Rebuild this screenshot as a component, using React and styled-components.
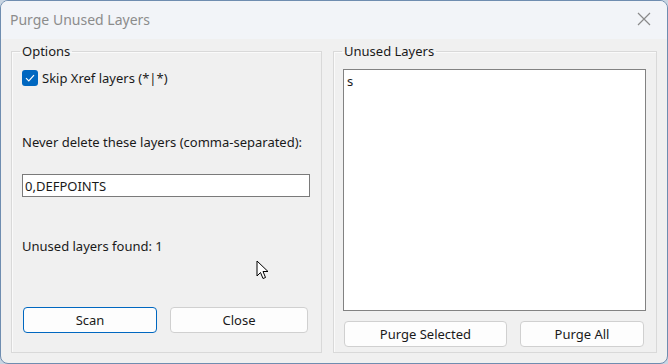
import React from "react";
import styled, { createGlobalStyle } from "styled-components";

const Global = createGlobalStyle`
  html, body { margin: 0; padding: 0; background: #c9d5e2; }
  body { width: 668px; height: 364px; overflow: hidden; }
  * { box-sizing: border-box; }
`;

const Window = styled.div`
  position: relative;
  width: 668px;
  height: 364px;
  border: 1px solid #6f8db0;
  border-radius: 8px;
  background: #f0f0f0;
  overflow: hidden;
  display: flex;
  flex-direction: column;
  font-family: "Noto Sans", "Open Sans", sans-serif;
  font-size: 13px;
  color: #1a1a1a;
`;

const TitleBar = styled.div`
  height: 38px;
  flex: none;
  display: flex;
  align-items: center;
  justify-content: space-between;
  padding: 0 16px 0 9px;
  background: #f2f4f8;
`;

const Title = styled.div`
  font-size: 14px;
  color: #8c8c8c;
  padding-bottom: 1px;
`;

const CloseX = styled.svg`
  width: 14px;
  height: 14px;
  margin-bottom: 2px;
`;

const Body = styled.div`
  flex: 1;
  display: flex;
  gap: 11px;
  padding: 4px 10px 10px 10px;
`;

const Group = styled.fieldset`
  margin: 0;
  padding: 0;
  border: 1px solid #d9d9d9;
  box-shadow: inset 1px 1px 0 #fafafa;
  width: ${(p) => p.$w}px;
  display: flex;
  flex-direction: column;
  min-width: 0;
`;

const Legend = styled.legend`
  margin-left: 8px;
  padding: 0 2px;
  font-size: 13px;
  line-height: 16px;
`;

const GroupInner = styled.div`
  flex: 1;
  display: flex;
  flex-direction: column;
  padding: ${(p) => p.$pad};
`;

const CheckRow = styled.label`
  display: flex;
  align-items: center;
  gap: 4px;
  height: 16px;
`;

const CheckBox = styled.span`
  width: 16px;
  height: 16px;
  border-radius: 3px;
  background: #0067c0;
  display: flex;
  align-items: center;
  justify-content: center;
`;

const Text = styled.div`
  margin-top: ${(p) => p.$mt || 0}px;
  line-height: 18px;
`;

const TextInput = styled.div`
  margin-top: ${(p) => p.$mt || 0}px;
  height: 23px;
  width: 288px;
  border: 1px solid #7a7a7a;
  background: #fff;
  padding: 0 2px;
  display: flex;
  align-items: center;
`;

const Spacer = styled.div`
  flex: 1;
`;

const ButtonRow = styled.div`
  display: flex;
  gap: ${(p) => p.$gap}px;
  padding-left: ${(p) => p.$pl || 0}px;
`;

const Button = styled.button`
  width: ${(p) => p.$w}px;
  height: 26px;
  border-radius: 4px;
  border: 1px solid ${(p) => (p.$default ? "#0067c0" : "#d0d0d0")};
  background: #fdfdfd;
  font-family: inherit;
  font-size: 13px;
  color: #1a1a1a;
  padding: 0;
`;

const ListBox = styled.div`
  height: 242px;
  border: 1px solid #828282;
  background: #fff;
  padding: 2px 3px;
  line-height: 18px;
`;

const Cursor = styled.svg`
  position: absolute;
  left: 255px;
  top: 259px;
  width: 14px;
  height: 20px;
`;

export default function App() {
  return (
    <>
      <Global />
      <Window>
        <TitleBar>
          <Title>Purge Unused Layers</Title>
          <CloseX viewBox="0 0 14 14">
            <path d="M1 1 L13 13 M13 1 L1 13" stroke="#8a8a8a" strokeWidth="1.2" fill="none" />
          </CloseX>
        </TitleBar>
        <Body>
          <Group $w={311}>
            <Legend>Options</Legend>
            <GroupInner $pad="11px 11px 19px 10px">
              <CheckRow>
                <CheckBox>
                  <svg width="10" height="8" viewBox="0 0 10 8">
                    <path d="M1 4.2 L3.8 7 L9 1.2" stroke="#fff" strokeWidth="1.2" fill="none" />
                  </svg>
                </CheckBox>
                Skip Xref layers (*|*)
              </CheckRow>
              <Text $mt={47}>Never delete these layers (comma-separated):</Text>
              <TextInput $mt={23}>0,DEFPOINTS</TextInput>
              <Text $mt={40}>Unused layers found: 1</Text>
              <Spacer />
              <ButtonRow $gap={13} $pl={1}>
                <Button $w={134} $default>Scan</Button>
                <Button $w={138}>Close</Button>
              </ButtonRow>
            </GroupInner>
          </Group>
          <Group $w={324}>
            <Legend>Unused Layers</Legend>
            <GroupInner $pad="10px 10px 5px 9px">
              <ListBox>s</ListBox>
              <Spacer />
              <ButtonRow $gap={13} $pl={1}>
                <Button $w={163}>Purge Selected</Button>
                <Button $w={124}>Purge All</Button>
              </ButtonRow>
            </GroupInner>
          </Group>
        </Body>
        <Cursor viewBox="0 0 14 20">
          <path d="M1 1 L1 16 L4.5 12.5 L7 18.5 L9.5 17.5 L7 11.5 L12 11.5 Z" fill="#fff" stroke="#000" strokeWidth="1" strokeLinejoin="round" />
        </Cursor>
      </Window>
    </>
  );
}
